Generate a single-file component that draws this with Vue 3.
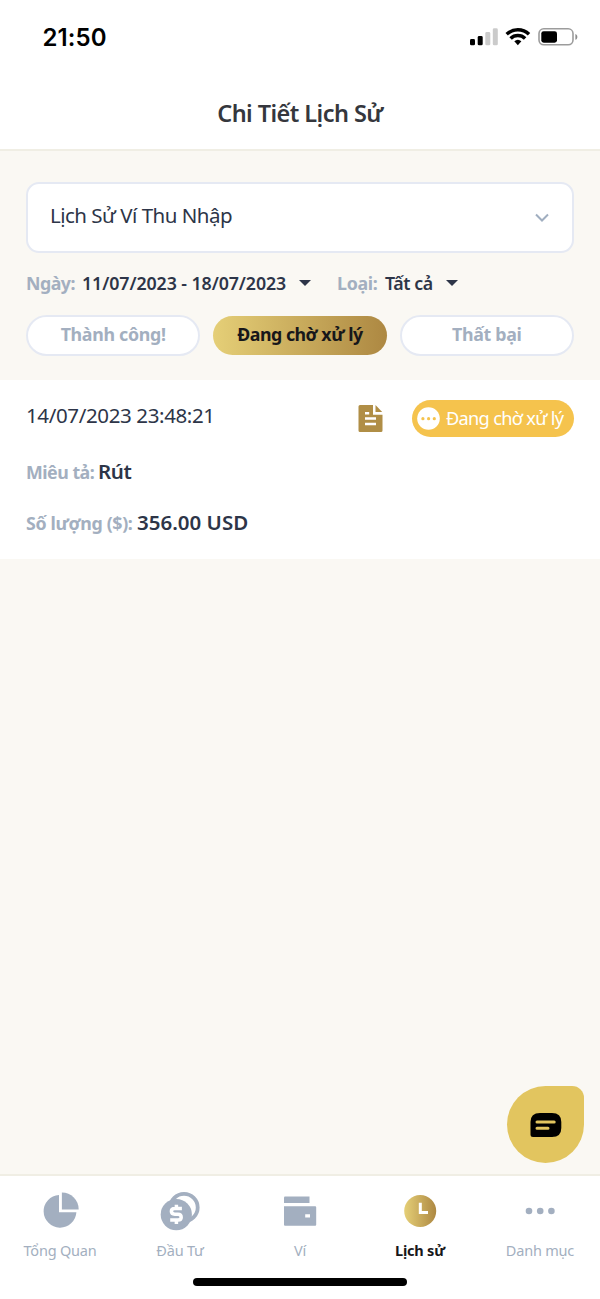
<!-- Wallet history screen: filters, status tabs, one transaction and the bottom nav -->
<script setup>
import { ref } from 'vue'

const tabs = [
  { id: 'done',    label: 'Thành công!' },
  { id: 'pending', label: 'Đang chờ xử lý' },
  { id: 'failed',  label: 'Thất bại' },
]
const activeTab = ref('pending')

const rows = [
  { date: '14/07/2023 23:48:21', desc: 'Rút', amount: '356.00 USD', status: 'Đang chờ xử lý' },
]

const nav = [
  { id: 'overview', label: 'Tổng Quan' },
  { id: 'invest',   label: 'Đầu Tư' },
  { id: 'wallet',   label: 'Ví' },
  { id: 'history',  label: 'Lịch sử' },
  { id: 'more',     label: 'Danh mục' },
]
const activeNav = ref('history')
</script>

<template>
  <div class="screen">
    <header class="header">
      <div class="status-bar">
        <span class="clock">21:50</span>
        <svg class="status-icons" width="110" height="22" viewBox="0 0 110 22">
          <rect x="2" y="13" width="5" height="6.3" rx="1.4" />
          <rect x="9.7" y="10" width="5" height="9.3" rx="1.4" />
          <rect x="17.3" y="6" width="5" height="13.3" rx="1.4" fill="#cbcbcb" />
          <rect x="24.8" y="2.3" width="5" height="17" rx="1.4" fill="#cbcbcb" />
          <g fill="none" stroke="#000" stroke-width="3.5">
            <path d="M38.7 8.2A16 16 0 0 1 61 8.2" />
            <path d="M42.6 12.6A10.3 10.3 0 0 1 57.1 12.6" />
          </g>
          <path d="M46.3 15.3A5.5 5.5 0 0 1 53.4 15.3L49.85 19.2Z" />
          <rect x="71" y="2.8" width="34" height="16" rx="4.8" fill="none" stroke="#9c9c9c" stroke-width="1.6" />
          <rect x="73.3" y="5.2" width="15.7" height="11.5" rx="2.4" />
          <path d="M107.4 7.9C110 8.8 110 12.9 107.4 13.8Z" fill="#8c8c8c" />
        </svg>
      </div>
      <h1 class="title"><span>Chi Tiết Lịch Sử</span></h1>
    </header>

    <main class="content">
      <section class="filters">
        <div class="select">
          <span class="select-text">Lịch Sử Ví Thu Nhập</span>
          <svg width="14" height="10" viewBox="0 0 14 10">
            <path d="M1 1.5L7 7.5L13 1.5" fill="none" stroke="#a0aec0" stroke-width="2" />
          </svg>
        </div>

        <div class="filter-row">
          <span class="label ngay">Ngày:</span>
          <span class="value range">11/07/2023 - 18/07/2023</span>
          <i class="caret"></i>
          <span class="label loai">Loại:</span>
          <span class="value all">Tất cả</span>
          <i class="caret"></i>
        </div>

        <div class="tabs">
          <button
            v-for="t in tabs"
            :key="t.id"
            class="tab"
            :class="{ on: t.id === activeTab }"
            @click="activeTab = t.id"
          >{{ t.label }}</button>
        </div>
      </section>

      <article v-for="r in rows" :key="r.date" class="card">
        <div class="card-top">
          <span class="date">{{ r.date }}</span>
          <svg class="doc" width="25" height="28" viewBox="0 0 25 28">
            <path d="M2 0H15V9.8H24.5V25.5Q24.5 27 23 27H2Q.5 27 .5 25.5V1.5Q.5 0 2 0Z" fill="#b08e46" />
            <path d="M17.5 0L24.2 7H17.5Z" fill="#b08e46" />
            <path d="M7 7H11.2V9.4H7ZM7 12.2H18V14.8H7ZM7 17.8H18V20.2H7Z" fill="#fff" />
          </svg>
          <span class="badge">
            <svg width="23" height="23" viewBox="0 0 23 23">
              <circle cx="11.5" cy="11.5" r="11.3" fill="#fff" />
              <g fill="#f5c34d">
                <circle cx="5.9" cy="11.7" r="1.6" />
                <circle cx="11.6" cy="11.7" r="1.6" />
                <circle cx="17.3" cy="11.7" r="1.6" />
              </g>
            </svg>
            <span>{{ r.status }}</span>
          </span>
        </div>
        <p class="line"><span class="label mieu">Miêu tả:</span><b class="desc">{{ r.desc }}</b></p>
        <p class="line"><span class="label so">Số lượng ($):</span><b class="amount">{{ r.amount }}</b></p>
      </article>
    </main>

    <button class="chat">
      <svg width="32" height="26" viewBox="0 0 32 26">
        <path d="M10 1H22Q31.3 1 31.3 10V16Q31.3 25 22 25H3Q.5 25 .5 22.5V10Q.5 1 10 1Z" />
        <path d="M7 9.9H24.2M7 16.2H18" stroke="#e2c55f" stroke-width="3" stroke-linecap="round" />
      </svg>
    </button>

    <nav class="nav">
      <div class="nav-items">
        <a
          v-for="n in nav"
          :key="n.id"
          class="nav-item"
          :class="[n.id, { on: n.id === activeNav }]"
          @click="activeNav = n.id"
        >
          <svg width="42" height="42" viewBox="0 0 42 42" fill="#a3afc0">
            <template v-if="n.id === 'overview'">
              <path d="M20 5.9V23.3H37.4A16.4 16.4 0 1 1 20 5.9Z" />
              <path d="M22.9 3.4A17 17 0 0 1 39.7 20.4H22.9Z" />
            </template>
            <template v-else-if="n.id === 'invest'">
              <circle cx="25" cy="18.5" r="13.7" fill="none" stroke="#a3afc0" stroke-width="3.8" />
              <circle cx="17.3" cy="25.6" r="15.6" />
              <path
                d="M22.9 19.4H15.8Q12.4 19.4 12.4 22.3Q12.4 25.2 15.8 25.2H19Q22.2 25.2 22.2 28.2Q22.2 31.1 19 31.1H11.2M17.4 15.7V19.5M17.4 31V34.9"
                fill="none" stroke="#fff" stroke-width="3.5"
              />
            </template>
            <template v-else-if="n.id === 'wallet'">
              <path d="M6 7.5H30.5V14H5V8.5Q5 7.5 6 7.5Z" />
              <path fill-rule="evenodd" d="M5 17.2H36.2Q37.2 17.2 37.2 18.2V35.7Q37.2 36.7 36.2 36.7H6Q5 36.7 5 35.7ZM26.2 25.2V28.6H31V25.2Z" />
            </template>
            <template v-else-if="n.id === 'history'">
              <defs>
                <linearGradient id="gold">
                  <stop offset="0" stop-color="#e5cf77" />
                  <stop offset="1" stop-color="#ad8842" />
                </linearGradient>
              </defs>
              <circle cx="21.2" cy="22" r="16" fill="url(#gold)" />
              <path d="M21.3 13.8V23.6H29" fill="none" stroke="#fff" stroke-width="3" />
            </template>
            <template v-else>
              <circle cx="10" cy="22" r="3.3" />
              <circle cx="21.2" cy="22" r="3.3" />
              <circle cx="32.4" cy="22" r="3.3" />
            </template>
          </svg>
          <span>{{ n.label }}</span>
        </a>
      </div>
      <div class="home-bar"></div>
    </nav>
  </div>
</template>

<style>
body { margin: 0; }
</style>

<style scoped>
.screen {
  position: relative;
  width: 600px; height: 1299px;
  display: flex; flex-direction: column;
  background: #faf8f3; color: #2d3548;
  font-family: 'Noto Sans', 'Open Sans', sans-serif;
  white-space: nowrap; overflow: hidden;
}
button { font-family: inherit; padding: 0; border: 0; }

.header {
  box-sizing: border-box; height: 151px;
  background: #fff; border-bottom: 2px solid #f0eee4;
}
.status-bar {
  box-sizing: border-box; height: 74px;
  padding: 0 22px 0 42.5px;
  display: flex; align-items: center; justify-content: space-between;
}
.clock {
  font: 600 24px/30px Inter, sans-serif;
  color: #000; letter-spacing: .1px; padding-top: 1px;
}
.title {
  margin: 0; height: 75px; padding-top: 1px;
  font-size: 23.5px; line-height: 77px; font-weight: 600;
  color: #35373d; text-align: center; letter-spacing: -.56px;
}

.content { flex: 1; }
.filters { padding: 31px 26px 24px; }
.select {
  box-sizing: border-box; height: 71px;
  padding: 0 23px 0 22px;
  display: flex; align-items: center; justify-content: space-between;
  background: #fff; border: 2px solid #e5e9f3; border-radius: 13px;
}
.select-text { font-size: 20.5px; letter-spacing: -.5px; padding-bottom: 5px; }

.filter-row {
  margin-top: 17px; height: 26px;
  display: flex; align-items: center;
  font-size: 17.8px;
}
.label { color: #a3afc0; font-weight: 700; font-size: 17.8px; letter-spacing: -.5px; }
.value { font-weight: 600; letter-spacing: -.08px; }
.all { width: 61px; letter-spacing: -.4px; }
.ngay { width: 56px; }
.range { width: 217px; }
.loai { margin-left: 26px; width: 48px; letter-spacing: -.3px; }
.caret {
  border: solid transparent; border-width: 6.5px 6.5px 0;
  border-top-color: #2d3548;
}

.tabs {
  margin-top: 19px; height: 41px;
  display: grid; grid-template-columns: repeat(3, 1fr); gap: 12.5px; align-items: center;
}
.tab {
  box-sizing: border-box; height: 41px;
  padding-bottom: 4px;
  background: #fff; border: 2px solid #e5e9f3; border-radius: 21px;
  font-size: 17.8px; font-weight: 700; letter-spacing: -.3px; color: #a3afc0;
}
.tab.on {
  height: 39px; border: 0; letter-spacing: -.5px;
  background: linear-gradient(90deg, #e5cf77, #ad8842);
  color: #17171a;
}

.card {
  box-sizing: border-box; height: 179px;
  padding: 20px 26px 0; background: #fff;
}
.card-top { display: flex; align-items: center; height: 37px; }
.date { width: 332px; font-size: 20.5px; letter-spacing: -.37px; padding-bottom: 7px; }
.badge {
  box-sizing: border-box; margin-left: auto;
  width: 162px; height: 37px; padding-left: 5px;
  display: flex; align-items: center; gap: 6px;
  background: #f5c34d; border-radius: 19px;
  color: #fff; font-size: 18.2px; letter-spacing: -.7px;
}
.badge span { padding-bottom: 2px; }
.line { margin: 0; height: 51px; line-height: 51px; }
.line:first-of-type { margin-top: 9px; }
.line b { font-size: 20.5px; font-weight: 600; letter-spacing: -.4px; }
.line .amount { letter-spacing: 0; }
.line .label { display: inline-block; }
.mieu { width: 72px; }
.so { width: 111px; letter-spacing: -.35px; }

.chat {
  position: absolute; left: 507px; top: 1086px;
  width: 77px; height: 77px;
  display: flex; align-items: center; justify-content: center;
  background: #e2c55f; border-radius: 39px 12px 39px 39px;
}

.nav {
  box-sizing: border-box; height: 125px;
  background: #fff; border-top: 2px solid #f0eee4;
}
.nav-items { display: flex; height: 102px; }
.nav-item {
  flex: 1; padding-top: 13px;
  display: flex; flex-direction: column; align-items: center;
  color: #a3afc0; font-size: 14.5px; letter-spacing: -.2px;
}
.nav-item svg { flex-shrink: 0; }
.nav-item span { margin-top: 9px; line-height: 20px; }
.nav-item.on { color: #17171a; font-weight: 700; letter-spacing: -.2px; }
.home-bar { width: 214px; height: 8px; margin: 0 auto; border-radius: 4px; background: #000; }
</style>
